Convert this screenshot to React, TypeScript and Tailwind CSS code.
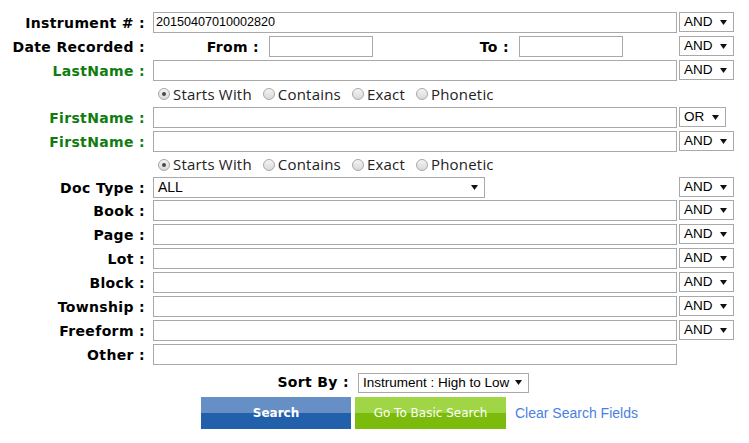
import React from "react"

const labelFont = { fontFamily: '"DejaVu Sans", Verdana, sans-serif' }

function Arrow() {
  return (
    <svg width="7" height="5" viewBox="0 0 7 5" className="shrink-0">
      <path d="M0 0 H7 L3.5 5 Z" fill="#111" />
    </svg>
  )
}

function Select({ value, width }: { value: string; width: string }) {
  return (
    <div
      className={`${width} h-[20px] border border-[#a9a9a9] bg-white flex items-center justify-between pl-[4px] pr-[6px] text-[13.5px] text-black font-['Liberation_Sans',Arial,sans-serif]`}
    >
      <span className="leading-none">{value}</span>
      <Arrow />
    </div>
  )
}

function TextBox({ value, width }: { value?: string; width: string }) {
  return (
    <div
      className={`${width} h-[21px] border border-[#a9a9a9] bg-white flex items-center pl-[2px] text-[12.6px] text-black font-['Liberation_Sans',Arial,sans-serif]`}
    >
      {value}
    </div>
  )
}

function Label({ text, green }: { text: string; green?: boolean }) {
  return (
    <div
      className={`w-[145px] h-[21px] pt-[1px] flex items-center justify-end text-[14px] font-bold tracking-[0.35px] ${
        green ? "text-[#107c10]" : "text-black"
      }`}
      style={labelFont}
    >
      {text}
    </div>
  )
}

function Row({
  label,
  green,
  value,
  op = "AND",
  noOp,
}: {
  label: string
  green?: boolean
  value?: string
  op?: string
  noOp?: boolean
}) {
  return (
    <div className="flex items-start h-[24px]">
      <Label text={label} green={green} />
      <div className="ml-[8px]">
        <TextBox value={value} width="w-[524px]" />
      </div>
      {!noOp && (
        <div className="ml-[2px]">
          <Select value={op} width={op === "OR" ? "w-[47px]" : "w-[55px]"} />
        </div>
      )}
    </div>
  )
}

function Radio({ checked }: { checked?: boolean }) {
  return (
    <span className="w-[12px] h-[12px] rounded-full border border-[#a8a8a8] bg-gradient-to-b from-[#f4f4f4] to-[#d9d9d9] flex items-center justify-center shrink-0">
      {checked && <span className="w-[4px] h-[4px] rounded-full bg-[#4a4a4a]" />}
    </span>
  )
}

function RadioRow({ h }: { h: string }) {
  const opts = ["Starts With", "Contains", "Exact", "Phonetic"]
  return (
    <div className={`flex items-center ${h} pb-[3px] pl-[158px] text-[15px] text-[#222] font-['Open_Sans',sans-serif]`}>
      {opts.map((o, i) => (
        <label key={o} className="flex items-center mr-[11px]">
          <Radio checked={i === 0} />
          <span className="ml-[3px] tracking-[0.2px]">{o}</span>
        </label>
      ))}
    </div>
  )
}

export default function App() {
  return (
    <div className="w-[749px] h-[443px] bg-white pt-[12px]">
      <Row label="Instrument # :" value="20150407010002820" />

      <div className="flex items-start h-[24px]">
        <Label text="Date Recorded :" />
        <div className="ml-[8px] w-[524px] flex items-start">
          <div
            className="w-[106px] h-[21px] pt-[1px] flex items-center justify-end text-[14px] font-bold tracking-[0.35px]"
            style={labelFont}
          >
            From :
          </div>
          <div className="ml-[10px]">
            <TextBox width="w-[104px]" />
          </div>
          <div
            className="w-[136px] h-[21px] pt-[1px] flex items-center justify-end text-[14px] font-bold tracking-[0.35px]"
            style={labelFont}
          >
            To :
          </div>
          <div className="ml-[10px]">
            <TextBox width="w-[104px]" />
          </div>
        </div>
        <div className="ml-[2px]">
          <Select value="AND" width="w-[55px]" />
        </div>
      </div>

      <Row label="LastName :" green />
      <RadioRow h="h-[23px]" />
      <Row label="FirstName :" green op="OR" />
      <Row label="FirstName :" green />
      <RadioRow h="h-[22px]" />

      <div className="flex items-start h-[23px]">
        <Label text="Doc Type :" />
        <div className="ml-[8px] w-[524px]">
          <div className="w-[332px] h-[21px] border border-[#a9a9a9] bg-white flex items-center justify-between pl-[4px] pr-[6px] text-[14px] font-['Liberation_Sans',Arial,sans-serif]">
            <span>ALL</span>
            <Arrow />
          </div>
        </div>
        <div className="ml-[2px]">
          <Select value="AND" width="w-[55px]" />
        </div>
      </div>

      <Row label="Book :" />
      <Row label="Page :" />
      <Row label="Lot :" />
      <Row label="Block :" />
      <Row label="Township :" />
      <Row label="Freeform :" />
      <Row label="Other :" noOp />

      <div className="flex items-center h-[29px]">
        <div className="w-[349px] text-right text-[14px] font-bold tracking-[0.35px]" style={labelFont}>
          Sort By :
        </div>
        <div className="ml-[9px]">
          <Select value="Instrument : High to Low" width="w-[171px]" />
        </div>
      </div>

      <div className="flex items-center pl-[201px]">
        <button className="w-[150px] h-[32px] flex flex-col relative">
          <span className="h-1/2 w-full bg-[#668fc6]" />
          <span className="h-1/2 w-full bg-[#2360ab]" />
          <span
            className="absolute inset-0 flex items-center justify-center text-white text-[12px] font-bold"
            style={labelFont}
          >
            Search
          </span>
        </button>
        <button className="ml-[4px] w-[151px] h-[32px] flex flex-col relative">
          <span className="h-1/2 w-full bg-[#a0d545]" />
          <span className="h-1/2 w-full bg-[#7bbb0b]" />
          <span
            className="absolute inset-0 flex items-center justify-center text-white text-[12px]"
            style={labelFont}
          >
            Go To Basic Search
          </span>
        </button>
        <a className="ml-[9px] text-[14px] text-[#4b7fe3] font-['Liberation_Sans',Arial,sans-serif]">
          Clear Search Fields
        </a>
      </div>
    </div>
  )
}
